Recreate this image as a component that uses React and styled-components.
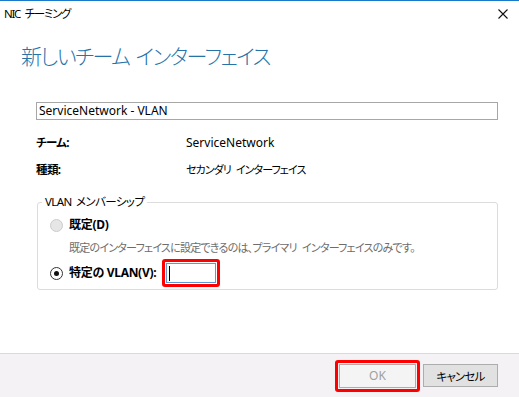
import React from "react";
import styled, { createGlobalStyle } from "styled-components";

const Global = createGlobalStyle`
  html, body { margin: 0; padding: 0; background: #fff; }
  body {
    font-family: "Noto Sans", "Noto Sans CJK JP", sans-serif;
    font-size: 12px;
    color: #000;
    font-feature-settings: "palt";
  }
  * { box-sizing: border-box; }
`;

const Window = styled.div`
  width: 519px;
  height: 397px;
  display: flex;
  flex-direction: column;
  background: #fff;
  border-top: 1px solid #1979ca;
  overflow: hidden;
`;

const TitleBar = styled.div`
  height: 26px;
  flex: none;
  display: flex;
  align-items: center;
  justify-content: space-between;
  padding: 0 11px 0 4px;
  line-height: 16px;
`;

const Title = styled.span`
  font-size: 11.5px;
  letter-spacing: -1.3px;
  word-spacing: 3px;
`;

const Close = styled.span`
  display: flex;
  width: 10px;
  height: 10px;
`;

const Content = styled.div`
  flex: 1;
  display: flex;
  flex-direction: column;
`;

const Heading = styled.h1`
  margin: 14px 0 0 21px;
  font-family: "Noto Sans CJK JP", sans-serif;
  font-weight: 300;
  font-size: 21px;
  line-height: 28px;
  color: #2673a8;
  letter-spacing: -1.5px;
  word-spacing: 3px;
`;

const Form = styled.div`
  margin: 33px 21px 0 36px;
  display: flex;
  flex-direction: column;
`;

const NameInput = styled.div`
  height: 18px;
  border: 1px solid #a7a7a7;
  padding: 0 2px;
  line-height: 16px;
  font-size: 12px;
`;

const InfoGrid = styled.div`
  display: grid;
  grid-template-columns: 150px 1fr;
  row-gap: 11px;
  margin-top: 15px;
  line-height: 16px;
`;

const Label = styled.span`
  font-weight: bold;
  font-size: 11.5px;
  letter-spacing: -0.6px;
`;

const Value = styled.span`
  font-size: ${(p) => (p.$ja ? "11px" : "12px")};
  letter-spacing: ${(p) => (p.$ja ? "-0.9px" : "0")};
  word-spacing: ${(p) => (p.$ja ? "3px" : "0")};
`;

const Group = styled.fieldset`
  margin: 16px 0 0 1px;
  padding: 5px 12px 2px 12px;
  border: 1px solid #dcdcdc;
  border-radius: 3px;
  min-width: 0;
`;

const Legend = styled.legend`
  margin-left: -8px;
  padding: 0 3px;
  line-height: 16px;
  font-size: 11.5px;
  letter-spacing: -0.6px;
  word-spacing: 2px;
`;

const RadioRow = styled.div`
  display: flex;
  align-items: center;
  gap: 6px;
  line-height: 16px;
  margin-top: ${(p) => p.$mt || 0}px;
`;

const Radio = styled.span`
  width: 13px;
  height: 13px;
  flex: none;
  border-radius: 50%;
  border: 1px solid ${(p) => (p.$disabled ? "#cccccc" : "#333")};
  background: ${(p) => (p.$disabled ? "#e6e6e6" : "#fff")};
  display: flex;
  align-items: center;
  justify-content: center;
  &::after {
    content: "";
    display: ${(p) => (p.$checked ? "block" : "none")};
    width: 5px;
    height: 5px;
    border-radius: 50%;
    background: #111;
  }
`;

const RadioLabel = styled.span`
  font-weight: bold;
  letter-spacing: -0.3px;
`;

const Note = styled.div`
  margin: 7px 0 0 19px;
  color: #6d6d6d;
  line-height: 16px;
  font-size: 11px;
  letter-spacing: -0.75px;
  word-spacing: 3px;
`;

const Highlight = styled.span`
  display: inline-flex;
  border: 3px solid #ff0000;
  border-radius: 3px;
  padding: 1px;
`;

const VlanInput = styled.span`
  display: flex;
  align-items: center;
  width: 50px;
  height: 20px;
  border: 1px solid #5b9bd5;
  padding-left: 2px;
  background: #fff;
  &::before {
    content: "";
    width: 1px;
    height: 15px;
    background: #000;
  }
`;

const Footer = styled.div`
  flex: none;
  height: 44px;
  border-top: 1px solid #dadada;
  background: #f4f2f5;
  display: flex;
  justify-content: flex-end;
  align-items: center;
  padding: 0 21px 0 0;
  gap: 3px;
`;

const Button = styled.button`
  font: inherit;
  font-size: ${(p) => (p.$ja ? "11.5px" : "12px")};
  letter-spacing: ${(p) => (p.$ja ? "-0.8px" : "0")};
  height: ${(p) => p.$h || 23}px;
  width: ${(p) => p.$w}px;
  padding: 0;
  border: 1px solid #adadad;
  background: ${(p) => (p.disabled ? "#f4f4f4" : "#e1e1e1")};
  color: ${(p) => (p.disabled ? "#a0a0a0" : "#000")};
  cursor: default;
`;

export default function App() {
  return (
    <>
      <Global />
      <Window>
        <TitleBar>
          <Title>NIC チーミング</Title>
          <Close>
            <svg width="10" height="10" viewBox="0 0 10 10">
              <path d="M0.5 0.5 L9.5 9.5 M9.5 0.5 L0.5 9.5" stroke="#111" strokeWidth="1.1" fill="none" />
            </svg>
          </Close>
        </TitleBar>
        <Content>
          <Heading>新しいチーム インターフェイス</Heading>
          <Form>
            <NameInput>ServiceNetwork - VLAN</NameInput>
            <InfoGrid>
              <Label>チーム:</Label>
              <Value>ServiceNetwork</Value>
              <Label>種類:</Label>
              <Value $ja>セカンダリ インターフェイス</Value>
            </InfoGrid>
            <Group>
              <Legend>VLAN メンバーシップ</Legend>
              <RadioRow $mt={2}>
                <Radio $disabled />
                <RadioLabel>既定(D)</RadioLabel>
              </RadioRow>
              <Note>既定のインターフェイスに設定できるのは、プライマリ インターフェイスのみです。</Note>
              <RadioRow $mt={3}>
                <Radio $checked />
                <RadioLabel>特定の VLAN(V):</RadioLabel>
                <Highlight>
                  <VlanInput />
                </Highlight>
              </RadioRow>
            </Group>
          </Form>
        </Content>
        <Footer>
          <Highlight>
            <Button disabled $w={77} $h={24}>OK</Button>
          </Highlight>
          <Button $w={75} $ja>キャンセル</Button>
        </Footer>
      </Window>
    </>
  );
}
